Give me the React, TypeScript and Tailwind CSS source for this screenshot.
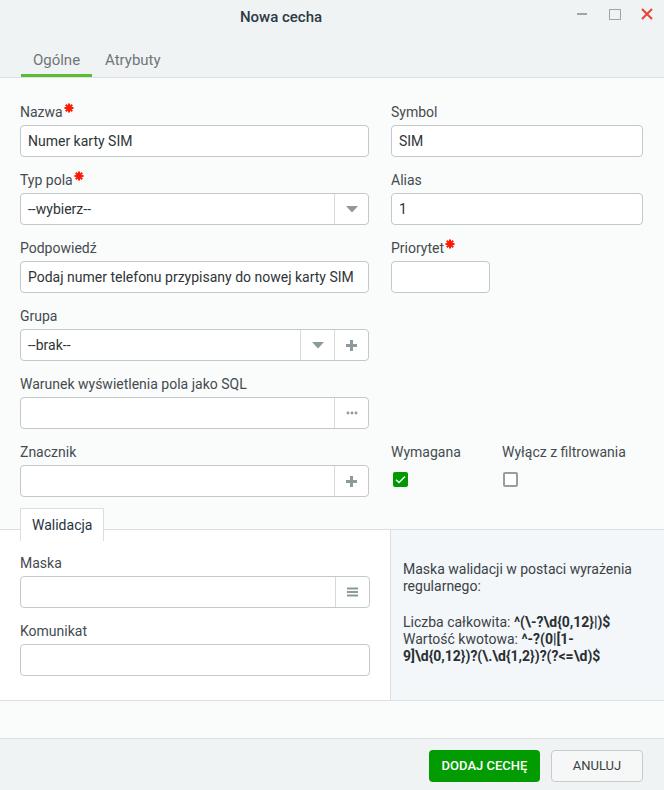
import React from "react";

const Req = () => (
  <svg width="10" height="10" viewBox="0 0 10 10" className="inline-block align-top mt-[1px] ml-[1px]">
    <g stroke="#ff1a00" strokeWidth="2" strokeLinecap="butt">
      <line x1="5" y1="0.5" x2="5" y2="9.5" />
      <line x1="0.5" y1="5" x2="9.5" y2="5" />
      <line x1="1.8" y1="1.8" x2="8.2" y2="8.2" />
      <line x1="8.2" y1="1.8" x2="1.8" y2="8.2" />
    </g>
  </svg>
);

const Label = ({ text, req }: { text: string; req?: boolean }) => (
  <div className="h-[20px] mb-[3px] text-[14px] leading-[20px] text-[#444b4f]">
    {text}
    {req && <Req />}
  </div>
);

const Caret = () => (
  <svg width="12" height="7" viewBox="0 0 12 7">
    <path d="M0 0 H12 L6 6.5 Z" fill="#8c9a9e" />
  </svg>
);

const Plus = () => (
  <svg width="11" height="11" viewBox="0 0 11 11">
    <rect x="4" y="0" width="3" height="11" fill="#8c9a9e" />
    <rect x="0" y="4" width="11" height="3" fill="#8c9a9e" />
  </svg>
);

const Dots = () => (
  <svg width="12" height="4" viewBox="0 0 12 4">
    <circle cx="2" cy="2" r="1.4" fill="#8c9a9e" />
    <circle cx="6" cy="2" r="1.4" fill="#8c9a9e" />
    <circle cx="10" cy="2" r="1.4" fill="#8c9a9e" />
  </svg>
);

const Bars = () => (
  <svg width="11" height="10" viewBox="0 0 11 10">
    <rect x="0" y="0.5" width="11" height="2" fill="#8c9a9e" />
    <rect x="0" y="4" width="11" height="2" fill="#8c9a9e" />
    <rect x="0" y="7.5" width="11" height="2" fill="#8c9a9e" />
  </svg>
);

const Input = ({
  value,
  className = "",
  addons = [],
}: {
  value?: string;
  className?: string;
  addons?: React.ReactNode[];
}) => (
  <div
    className={`h-[32px] flex items-stretch bg-white border border-[#c3c8cb] rounded-[4px] ${className}`}
  >
    <div className="flex-1 flex items-center pl-[7px] text-[14px] text-[#2f3437] overflow-hidden whitespace-nowrap">
      {value}
    </div>
    {addons.map((a, i) => (
      <div key={i} className="w-[34px] flex items-center justify-center border-l border-[#d6dadc]">
        {a}
      </div>
    ))}
  </div>
);

const Field = ({
  label,
  req,
  children,
}: {
  label: string;
  req?: boolean;
  children: React.ReactNode;
}) => (
  <div>
    <Label text={label} req={req} />
    {children}
  </div>
);

export default function App() {
  return (
    <div
      className="w-[664px] h-[790px] flex flex-col bg-[#fafbfb] overflow-hidden"
      style={{ fontFamily: "Roboto, 'Liberation Sans', sans-serif" }}
    >
      {/* window header with title and tabs */}
      <div className="h-[78px] bg-[#eff3f4] border-b border-[#dde1e3] flex flex-col">
        <div className="h-[35px] relative flex items-center justify-center pr-[102px]">
          <span className="text-[15px] font-medium text-[#2e3a44]">Nowa cecha</span>
          <div className="absolute right-[11px] top-[8px] flex items-center">
            <div className="w-[10px] h-[12px] flex items-center">
              <div className="w-[10px] h-[2px] bg-[#9aa6a9]" />
            </div>
            <div className="ml-[22px] w-[12px] h-[11px] border-[1.5px] border-[#9aa6a9]" />
            <svg className="ml-[20px]" width="12" height="12" viewBox="0 0 12 12">
              <path d="M1 1 L11 11 M11 1 L1 11" stroke="#e8473b" strokeWidth="2.2" />
            </svg>
          </div>
        </div>
        <div className="flex pl-[21px] mt-[13px]">
          <div className="w-[71px] h-[29px] flex justify-center border-b-[3px] border-[#5cbb2e] text-[15px] text-[#6f7679] leading-[24px]">
            Ogólne
          </div>
          <div className="ml-[13px] h-[29px] text-[15px] text-[#6f7679] leading-[24px]">
            Atrybuty
          </div>
        </div>
      </div>

      {/* main form */}
      <div className="px-[20px] pt-[24px] grid grid-cols-[349px_252px] gap-x-[22px] gap-y-[13px]">
        <Field label="Nazwa" req>
          <Input value="Numer karty SIM" />
        </Field>
        <Field label="Symbol">
          <Input value="SIM" />
        </Field>

        <Field label="Typ pola" req>
          <Input value="--wybierz--" addons={[<Caret />]} />
        </Field>
        <Field label="Alias">
          <Input value="1" />
        </Field>

        <Field label="Podpowiedź">
          <Input value="Podaj numer telefonu przypisany do nowej karty SIM" />
        </Field>
        <Field label="Priorytet" req>
          <Input className="w-[99px]" />
        </Field>

        <Field label="Grupa">
          <Input value="--brak--" addons={[<Caret />, <Plus />]} />
        </Field>
        <div />

        <Field label="Warunek wyświetlenia pola jako SQL">
          <Input addons={[<Dots />]} />
        </Field>
        <div />

        <Field label="Znacznik">
          <Input addons={[<Plus />]} />
        </Field>
        <div className="flex">
          <div className="w-[111px]">
            <Label text="Wymagana" />
            <div className="mt-[10px] ml-[2px] w-[15px] h-[15px] rounded-[2px] bg-[#019a01] flex items-center justify-center">
              <svg width="11" height="9" viewBox="0 0 11 9">
                <path d="M1 4.8 L4 7.5 L10 1.5" fill="none" stroke="white" strokeWidth="1.4" />
              </svg>
            </div>
          </div>
          <div>
            <Label text="Wyłącz z filtrowania" />
            <div className="mt-[10px] ml-[1px] w-[15px] h-[15px] rounded-[2px] border-2 border-[#959ea2] bg-white" />
          </div>
        </div>
      </div>

      {/* validation tab strip */}
      <div className="mt-[11px] h-[22px] border-b border-[#dcdfe1] pl-[20px] flex items-start">
        <div className="relative z-10 h-[33px] px-[11px] pt-[6px] bg-white border-x border-t border-[#dcdfe1] text-[14px] leading-[20px] text-[#243441]">
          Walidacja
        </div>
      </div>

      {/* validation panel */}
      <div className="flex h-[171px] border-b border-[#dcdfe1]">
        <div className="w-[391px] bg-white border-r border-[#dcdfe1] px-[20px] pt-[23px]">
          <Field label="Maska">
            <Input addons={[<Bars />]} />
          </Field>
          <div className="mt-[13px]">
            <Field label="Komunikat">
              <Input />
            </Field>
          </div>
        </div>
        <div className="flex-1 bg-[#f3f7fa] pl-[12px] pr-[10px] pt-[31px] text-[14px] leading-[17px] text-[#3b4246]">
          <p>Maska walidacji w postaci wyrażenia regularnego:</p>
          <p className="mt-[19px]">
            Liczba całkowita: <b className="font-bold text-[#2a2f33]">^(\-?\d&#123;0,12&#125;|)$</b>
            <br />
            Wartość kwotowa:{" "}
            <b className="font-bold text-[#2a2f33]">
              ^-?(0|[1-
              <br />
              9]\d&#123;0,12&#125;)?(\.\d&#123;1,2&#125;)?(?&lt;=\d)$
            </b>
          </p>
        </div>
      </div>

      <div className="h-[37px]" />

      {/* footer buttons */}
      <div className="flex-1 bg-[#eff3f4] border-t border-[#dde1e3] flex justify-end items-start pt-[11px] pr-[21px] gap-[11px]">
        <button className="w-[111px] h-[32px] rounded-[4px] bg-[#029b02] text-white text-[13px] font-medium">
          DODAJ CECHĘ
        </button>
        <button className="w-[92px] h-[32px] rounded-[4px] bg-[#f6f7f7] border border-[#c7cbcd] text-[#3a4044] text-[13px]">
          ANULUJ
        </button>
      </div>
    </div>
  );
}
